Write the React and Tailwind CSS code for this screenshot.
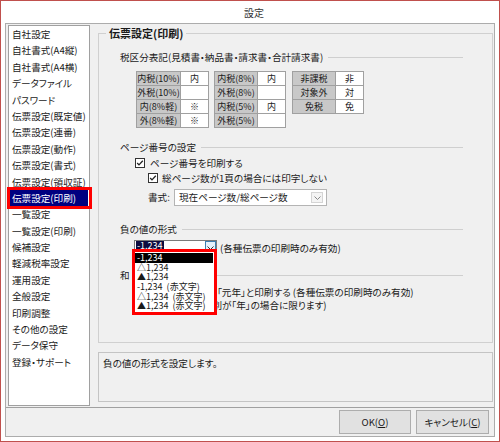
import React from 'react';

const listItems = [
  '自社設定', '自社書式(A4縦)', '自社書式(A4横)', 'データファイル', 'パスワード',
  '伝票設定(既定値)', '伝票設定(連番)', '伝票設定(動作)', '伝票設定(書式)', '伝票設定(領収証)',
  '伝票設定(印刷)', '一覧設定', '一覧設定(印刷)', '候補設定', '軽減税率設定', '運用設定',
  '全般設定', '印刷調整', 'その他の設定', 'データ保守', '登録・サポート',
];
const selected = '伝票設定(印刷)';

const table1 = [['内税(10%)', '内'], ['外税(10%)', ''], ['内(8%軽)', '※'], ['外(8%軽)', '※']];
const table2 = [['内税(8%)', '内'], ['外税(8%)', ''], ['内税(5%)', '内'], ['外税(5%)', '']];
const table3 = [['非課税', '非'], ['対象外', '対'], ['免税', '免']];

const negFormats = [
  ['-1,234', ''], ['△1,234', ''], ['▲1,234', ''],
  ['-1,234', '(赤文字)'], ['△1,234', '(赤文字)'], ['▲1,234', '(赤文字)'],
];

function Chevron({ color = '#606060' }) {
  return (
    <svg width="7" height="4" viewBox="0 0 7 4" fill="none">
      <path d="M0.5 0.5L3.5 3.5L6.5 0.5" stroke={color} strokeWidth="1" />
    </svg>
  );
}

function Check() {
  return (
    <span className="w-[10px] h-[10px] border border-[#333] bg-white flex items-center justify-center shrink-0">
      <svg width="8" height="8" viewBox="0 0 8 8" fill="none">
        <path d="M1.2 4l1.8 1.9L6.8 1.8" stroke="#222" strokeWidth="1.3" />
      </svg>
    </span>
  );
}

function Section({ title, className }) {
  return (
    <div className={`flex items-center h-[14px] ${className}`}>
      <span className="whitespace-nowrap">{title}</span>
      <div className="flex-1 h-px bg-[#cfcfcf] ml-[5px]" />
    </div>
  );
}

function TaxTable({ rows, labelW, className = '' }) {
  return (
    <div className={`border-l border-t border-[#a0a0a0] text-[9px] ${className}`}>
      {rows.map(([label, value]) => (
        <div key={label} className="flex h-[14px]">
          <div className={`${labelW} bg-[#c8c8c8] border-r border-b border-[#a0a0a0] flex items-center justify-center whitespace-nowrap`}>
            {label}
          </div>
          <div className="w-[28px] bg-white border-r border-b border-[#a0a0a0] flex items-center justify-center">
            {value}
          </div>
        </div>
      ))}
    </div>
  );
}

function ListBox() {
  return (
    <div className="ml-[2px] mt-[1px] w-[82px] h-[381px] border border-[#a0a0a0] bg-white">
      {listItems.map((item) => (
        <div
          key={item}
          className={`relative mx-[1px] pl-[2px] h-[16.4px] leading-[16.4px] whitespace-nowrap ${
            item === selected ? 'bg-[#000080] text-white' : ''
          }`}
        >
          {item}
          {item === selected && (
            <div className="absolute -left-[3px] -right-[4px] -top-[3px] -bottom-[3px] border-[3px] border-[#ff0000]" />
          )}
        </div>
      ))}
    </div>
  );
}

export default function App() {
  return (
    <div className="w-[500px] h-[442px] border border-[#c0504d] bg-white flex flex-col text-[#1a1a1a] font-['Noto_Sans_CJK_JP',sans-serif] [font-feature-settings:'palt'] text-[9.6px]">
      {/* Title bar */}
      <div className="h-[22px] shrink-0 flex items-center justify-center pl-[8px] text-[10px] text-[#333]">設定</div>

      {/* Client */}
      <div className="flex-1 mx-[4px] mb-[4px] border border-[#acacac] bg-[#f0f0f0] flex flex-col min-h-0">
        <div className="h-[384px] shrink-0 flex border-b border-[#a0a0a0]">
          <ListBox />

          <div className="flex-1 ml-[8px] mr-[1px] flex flex-col">
            <fieldset className="mt-[2px] h-[317px] border border-[#d0d0d0] p-0 m-0 min-w-0">
              <legend className="ml-[7px] px-[3px] text-[11px] font-bold leading-[14px]">伝票設定(印刷)</legend>
              <div className="pl-[21px] pr-[29px]">
                <Section title="税区分表記(見積書・納品書・請求書・合計請求書)" className="mt-[10px]" />
                <div className="flex items-start mt-[7px] ml-[16px]">
                  <TaxTable rows={table1} labelW="w-[44px]" />
                  <TaxTable rows={table2} labelW="w-[43px]" className="ml-[5px]" />
                  <TaxTable rows={table3} labelW="w-[43px]" className="ml-[6px]" />
                </div>

                <Section title="ページ番号の設定" className="mt-[12px]" />
                <div className="flex items-center h-[14px] mt-[2px] ml-[15px]">
                  <Check />
                  <span className="ml-[5px]">ページ番号を印刷する</span>
                </div>
                <div className="flex items-center h-[14px] mt-[1px] ml-[28px]">
                  <Check />
                  <span className="ml-[4px]">総ページ数が1頁の場合には印字しない</span>
                </div>
                <div className="flex items-center h-[17px] mt-[4px] ml-[28px]">
                  <span className="w-[26px]">書式:</span>
                  <div className="w-[153px] h-full border border-[#b4b4b4] bg-white flex items-center pl-[4px] pr-[3px]">
                    <span className="flex-1 whitespace-nowrap">現在ページ数/総ページ数</span>
                    <span className="w-[12px] h-[11px] border border-[#d4d4d4] bg-[#f4f4f4] flex items-center justify-center">
                      <Chevron color="#888" />
                    </span>
                  </div>
                </div>

                <Section title="負の値の形式" className="mt-[16px]" />
                <div className="flex items-center h-[16px] mt-[4px] ml-[14px]">
                  <div className="relative w-[83px] h-full border border-[#7a7a7a] bg-white flex items-start pl-[1px]">
                    <span className="bg-[#0c0c40] text-white px-[1px] leading-[10px] text-[9px]">-1,234</span>
                    <span className="ml-auto w-[11px] h-[14px] border border-[#3c7fb1] bg-[#e5f1fb] flex items-center justify-center">
                      <Chevron color="#333" />
                    </span>
                    {/* open dropdown list */}
                    <div className="absolute -left-[3px] top-[8px] w-[85px] h-[66px] border-[3px] border-[#ff0000] bg-white z-10 pt-[1px] text-[9px]">
                      {negFormats.map(([num, note], i) => (
                        <div
                          key={i}
                          className={`h-[9.67px] leading-[9.67px] pl-[2px] flex whitespace-nowrap ${
                            i === 0 ? 'bg-black text-white mr-[1px]' : ''
                          }`}
                        >
                          <span>{num}</span>
                          {note && <span className="ml-[4px]">{note}</span>}
                        </div>
                      ))}
                    </div>
                  </div>
                  <span className="ml-[3px] whitespace-nowrap">(各種伝票の印刷時のみ有効)</span>
                </div>

                {/* 和暦 section, mostly hidden under the open list */}
                <Section title="和" className="mt-[12px]" />
                <div className="flex items-center h-[14px] mt-[3px] ml-[15px] whitespace-nowrap">
                  <Check />
                  <span className="ml-[5px] w-[67px]" />
                  <span>「元年」と印刷する (各種伝票の印刷時のみ有効)</span>
                </div>
                <div className="flex items-center h-[13px] ml-[42px] whitespace-nowrap">
                  <span className="w-[55px]" />
                  <span className="w-[5px] overflow-hidden flex justify-end">別</span>
                  <span>が「年」の場合に限ります)</span>
                </div>
              </div>
            </fieldset>

            <div className="mt-[9px] h-[50px] border border-[#c4c4c4] pl-[4px] pt-[3px] leading-[14px]">
              負の値の形式を設定します。
            </div>
          </div>
        </div>

        {/* Buttons */}
        <div className="flex-1 flex justify-end items-start pt-[2px] pr-[5px] gap-[5px]">
          <button className="w-[72px] h-[24px] border border-[#adadad] bg-[#e1e1e1]">
            OK(<span className="underline">O</span>)
          </button>
          <button className="w-[73px] h-[24px] border border-[#adadad] bg-[#e1e1e1]">
            キャンセル(<span className="underline">C</span>)
          </button>
        </div>
      </div>
    </div>
  );
}
